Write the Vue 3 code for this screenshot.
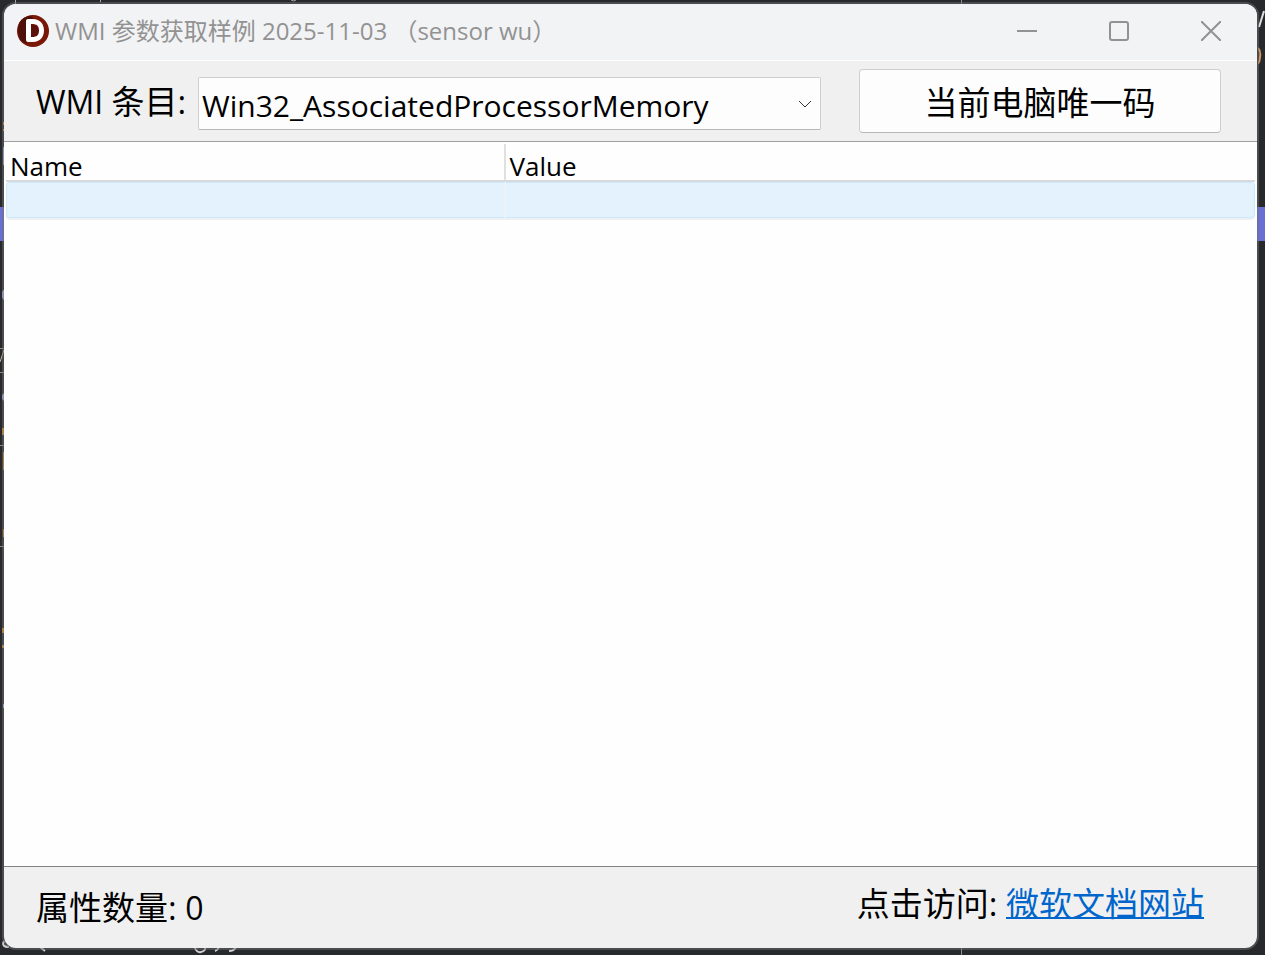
<script setup>
import { ref } from 'vue';

const clases = ref(['Win32_AssociatedProcessorMemory', 'Win32_BaseBoard', 'Win32_BIOS', 'Win32_Processor']);
const seleccion = ref('Win32_AssociatedProcessorMemory');
const filas = ref([{ id: 1, name: '', value: '' }]);
const total = ref(0);
</script>

<template>
    <div class="desktop">
        <!-- Editor de código detrás de la ventana -->
        <div class="editor" aria-hidden="true">
            <div class="selection"></div>
            <div class="guide"></div>
            <svg class="marks left" width="4" height="955" viewBox="0 0 4 955">
                <g fill="none" stroke="#8b8c8e">
                    <path d="M0 348.500h4M0 372.500h4M0 445.500h4M0 546.500h4" />
                    <path d="M0 362L4 350" stroke="#c9b9a0" />
                </g>
                <path d="M3 122v3h1v-3zM3 129v2h1v-2zM2 428h2v7h-2zM3 452h1v18h-1zM3 529h1v8h-1zM2 628h2v5h-2zM2 645h2v3h-2z" fill="#e08a24" />
                <path d="M2 292q2-3 2-2v10q-1 0-2-3zM2 395l2-2v8l-2-2zM3 147h1v18h-1zM3 704h1v4h-1z" fill="#a9b0f0" />
            </svg>
            <svg class="marks right" width="7" height="80" viewBox="0 0 7 80">
                <path d="M1 27L6 11" fill="none" stroke="#dcdcdc" stroke-width="2" />
                <path d="M0 48q3 3 2 9q0 4-2 7" fill="none" stroke="#d09a60" stroke-width="2" />
            </svg>
            <svg class="marks top" width="310" height="4" viewBox="0 0 310 4">
                <path d="M15.500 0v4M100.500 0v2M291 0q3 2 5 0" fill="none" stroke="#a9a9ac" />
            </svg>
            <svg class="marks bottom" width="250" height="16" viewBox="0 0 250 16">
                <path d="M4 2q-3 6 5 6M40 8l5 4M195 9q2 5 6 4q5-1 4-5M215 12q3-1 4-4M229 12q5 0 7-4" fill="none" stroke="#cfcfcf" stroke-width="2" />
            </svg>
        </div>

        <main class="window">
            <header class="titlebar">
                <svg class="logo" width="32" height="32" viewBox="0 0 32 32" aria-hidden="true">
                    <circle cx="16" cy="16" r="16" fill="#7a1707" />
                    <path d="M2 8Q0 16 3 25L10 29V12Q14 8 21 9L14 1Q6 1 2 8Z" fill="#50100a" />
                    <path d="M14 10h3q5 1 5 6t-5 6h-3Z" fill="#5c120a" />
                    <path d="M11 4h5C23 4 27 9 27 15.500S23 27 16 27H11Q9 27 9 25V6Q9 4 11 4ZM14 9v13h1c5 0 7-2 7-6.500S20 9 15 9Z" fill="#fff" fill-rule="evenodd" />
                </svg>
                <h1 class="title">WMI 参数获取样例 2025-11-03 （sensor wu）</h1>
                <div class="window-buttons">
                    <button type="button" aria-label="最小化">
                        <svg width="20" height="20" viewBox="0 0 20 20"><path d="M0 10h20" /></svg>
                    </button>
                    <button type="button" aria-label="最大化">
                        <svg width="20" height="20" viewBox="0 0 20 20"><rect x="1" y="1" width="18" height="18" rx="2" /></svg>
                    </button>
                    <button type="button" aria-label="关闭">
                        <svg width="20" height="20" viewBox="0 0 20 20"><path d="M0 0L20 20M20 0L0 20" /></svg>
                    </button>
                </div>
            </header>

            <section class="toolbar">
                <label class="label" for="wmi-class"><span class="latin">WMI </span>条目:</label>
                <div class="combo">
                    <select id="wmi-class" v-model="seleccion">
                        <option v-for="clase in clases" :key="clase" :value="clase">{{ clase }}</option>
                    </select>
                    <svg class="chevron" width="14" height="8" viewBox="0 0 14 8" aria-hidden="true"><path d="M1 1L7 7L13 1" /></svg>
                </div>
                <button type="button" class="unique-code">当前电脑唯一码</button>
            </section>

            <section class="list">
                <table>
                    <thead>
                        <tr>
                            <th scope="col" class="col-name">Name</th>
                            <th scope="col">Value</th>
                        </tr>
                    </thead>
                    <tbody>
                        <tr v-for="fila in filas" :key="fila.id">
                            <td>{{ fila.name }}</td>
                            <td>{{ fila.value }}</td>
                        </tr>
                    </tbody>
                </table>
            </section>

            <footer class="statusbar">
                <p class="count">属性数量: <span class="latin">{{ total }}</span></p>
                <p class="visit">点击访问: <a href="#">微软文档网站</a></p>
            </footer>
        </main>
    </div>
</template>

<style>
body {
    margin: 0;
    background: #27292c;
}
</style>

<style scoped>
.desktop {
    position: relative;
    box-sizing: border-box;
    min-height: 100vh;
    padding: 4px 8px 7px 4px;
    display: flex;
    overflow: hidden;
    background: #27292c;
    color: #000;
    font-family: "Open Sans", "Noto Sans CJK SC", sans-serif;
}

/* --- Fondo --- */
.editor {
    position: absolute;
    inset: 0;
}

.selection {
    position: absolute;
    top: 207px;
    left: 0;
    right: 0;
    height: 34px;
    background: #6a6fd6;
}

.guide {
    position: absolute;
    top: 0;
    bottom: 0;
    left: 76%;
    width: 1px;
    background: #8b8c8e;
}

.marks {
    position: absolute;
}

.marks.left,
.marks.top {
    top: 0;
    left: 0;
}

.marks.right {
    top: 0;
    right: 0;
}

.marks.bottom {
    bottom: 0;
    left: 0;
}

/* --- Ventana --- */
.window {
    position: relative;
    flex: 1;
    min-width: 0;
    display: flex;
    flex-direction: column;
    overflow: hidden;
    border-radius: 12px;
    background: #f0f0f0;
    box-shadow: 0 0 0 2px rgba(112, 112, 112, 0.5);
}

.titlebar {
    box-sizing: border-box;
    display: flex;
    align-items: center;
    height: 57px;
    padding: 0 0 2px 13px;
    background: #f2f3f5;
    border-bottom: 1px solid #fff;
}

.logo {
    flex: none;
}

.title {
    flex: 1;
    margin: 0 0 0 6px;
    font-size: 24px;
    font-weight: 400;
    line-height: 32px;
    white-space: nowrap;
    color: #929292;
}

.window-buttons {
    display: flex;
    height: 100%;
}

.window-buttons button {
    display: flex;
    align-items: center;
    justify-content: center;
    width: 92px;
    padding: 0;
    border: 0;
    background: transparent;
}

.window-buttons svg {
    fill: none;
    stroke: #929292;
    stroke-width: 2;
}

/* --- Barra superior --- */
.toolbar {
    display: flex;
    align-items: center;
    height: 80px;
    padding: 0 36px 0 32px;
    border-bottom: 1px solid #a0a0a0;
}

.label {
    width: 162px;
    padding-top: 2px;
    font-size: 33px;
    line-height: 48px;
    white-space: nowrap;
}

.latin {
    font-size: 32px;
}

.combo {
    position: relative;
    flex: 1;
    margin: 4px 38px 0 0;
}

.combo select {
    display: block;
    box-sizing: border-box;
    width: 100%;
    height: 53px;
    padding: 4px 40px 0 3px;
    appearance: none;
    border: 1px solid #cfcfcf;
    border-bottom-color: #b8b8b8;
    border-radius: 2px;
    background: #fdfdfd;
    color: #000;
    font-family: inherit;
    font-size: 30px;
}

.chevron {
    position: absolute;
    top: 23px;
    right: 9px;
    fill: none;
    stroke: #333;
    pointer-events: none;
}

.unique-code {
    width: 362px;
    height: 64px;
    padding: 0;
    border: 1px solid #cfcfcf;
    border-bottom-color: #b8b8b8;
    border-radius: 4px;
    background: #fdfdfd;
    color: #000;
    font-family: inherit;
    font-size: 33px;
}

/* --- Lista de propiedades --- */
.list {
    flex: 1;
    padding: 2px;
    background: #fefefe;
    border-bottom: 1px solid #828282;
}

table {
    width: 100%;
    table-layout: fixed;
    border-collapse: separate;
    border-spacing: 0;
}

th {
    padding: 8px 0 0 4px;
    border-bottom: 2px solid #d9d9d9;
    font-size: 26px;
    font-weight: 400;
    line-height: 28px;
    text-align: left;
}

th.col-name {
    box-sizing: border-box;
    width: 40%;
    border-right: 2px solid #e0e0e0;
}

td {
    box-sizing: border-box;
    height: 36px;
    padding: 0;
    border-top: 1px solid #cce8ff;
    border-bottom: 1px solid #cce8ff;
    background: #e4f2fe;
    box-shadow: 0 2px 0 #f0f0f0;
}

td:first-child {
    border-left: 1px solid #cce8ff;
    border-right: 2px solid #ebf2f8;
    border-radius: 4px 0 0 4px;
}

td:last-child {
    border-right: 1px solid #cce8ff;
    border-radius: 0 4px 4px 0;
}

/* --- Pie --- */
.statusbar {
    display: flex;
    align-items: center;
    justify-content: space-between;
    height: 81px;
    padding: 0 53px 0 32px;
    font-size: 33px;
}

.statusbar p {
    margin: 0;
    line-height: 48px;
}

.visit {
    padding-bottom: 8px;
}

.visit a {
    color: #0066cc;
    text-decoration: underline;
    text-decoration-thickness: 2px;
}
</style>
